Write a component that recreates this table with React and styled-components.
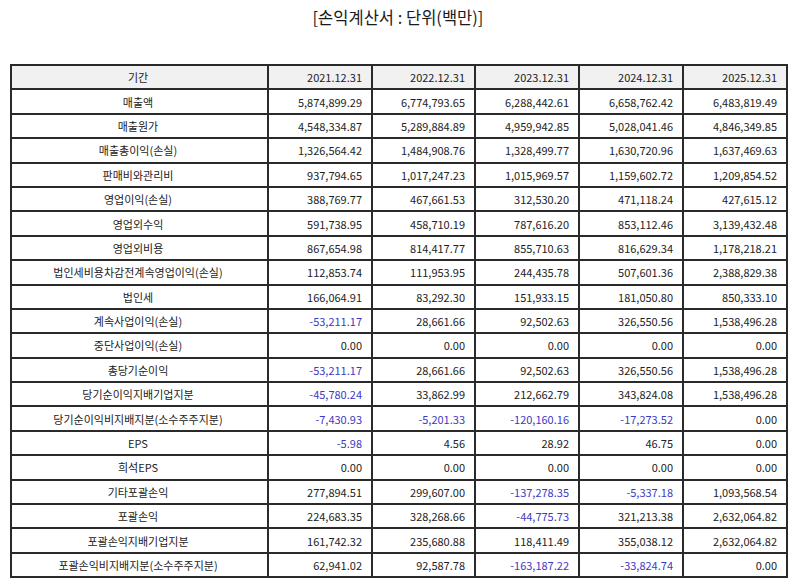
import React from "react";
import styled, { createGlobalStyle } from "styled-components";

const GlobalStyle = createGlobalStyle`
    html, body {
        margin: 0;
        padding: 0;
        background: #ffffff;
    }
    body {
        font-family: "Noto Sans CJK KR", "Noto Sans", sans-serif;
        color: #222;
    }
`;

const Page = styled.div`
    width: 794px;
    padding: 0 8px 0 10px;
    box-sizing: border-box;
`;

const Title = styled.h2`
    margin: 0 0 35px;
    padding-top: 5px;
    font-size: 16.5px;
    font-weight: 400;
    line-height: 24px;
    text-align: center;
    color: #1a1a1a;
`;

const Table = styled.table`
    width: 776px;
    border-collapse: collapse;
    table-layout: fixed;
    font-size: 11px;
`;

const Col = styled.col`
    width: ${(p) => p.$width}px;
`;

const Row = styled.tr`
    height: 24.4px;
`;

const Cell = styled.td`
    border: 2px solid #2a2a2a;
    padding: 0 9px 0 6px;
    text-align: ${(p) => (p.$label ? "center" : "right")};
    color: ${(p) => (p.$negative ? "#3a3ac4" : "#222")};
    background: #fff;
    white-space: nowrap;
    line-height: 16px;
`;

const HeadCell = styled.th`
    border: 2px solid #2a2a2a;
    padding: 0 9px 0 6px;
    text-align: ${(p) => (p.$label ? "center" : "right")};
    font-weight: 400;
    color: #222;
    background: #f1f1f1;
    white-space: nowrap;
    line-height: 16px;
`;

const columnWidths = [257, 104, 103, 104, 104, 104];

const periods = ["2021.12.31", "2022.12.31", "2023.12.31", "2024.12.31", "2025.12.31"];

const rows = [
    ["매출액", "5,874,899.29", "6,774,793.65", "6,288,442.61", "6,658,762.42", "6,483,819.49"],
    ["매출원가", "4,548,334.87", "5,289,884.89", "4,959,942.85", "5,028,041.46", "4,846,349.85"],
    ["매출총이익(손실)", "1,326,564.42", "1,484,908.76", "1,328,499.77", "1,630,720.96", "1,637,469.63"],
    ["판매비와관리비", "937,794.65", "1,017,247.23", "1,015,969.57", "1,159,602.72", "1,209,854.52"],
    ["영업이익(손실)", "388,769.77", "467,661.53", "312,530.20", "471,118.24", "427,615.12"],
    ["영업외수익", "591,738.95", "458,710.19", "787,616.20", "853,112.46", "3,139,432.48"],
    ["영업외비용", "867,654.98", "814,417.77", "855,710.63", "816,629.34", "1,178,218.21"],
    ["법인세비용차감전계속영업이익(손실)", "112,853.74", "111,953.95", "244,435.78", "507,601.36", "2,388,829.38"],
    ["법인세", "166,064.91", "83,292.30", "151,933.15", "181,050.80", "850,333.10"],
    ["계속사업이익(손실)", "-53,211.17", "28,661.66", "92,502.63", "326,550.56", "1,538,496.28"],
    ["중단사업이익(손실)", "0.00", "0.00", "0.00", "0.00", "0.00"],
    ["총당기순이익", "-53,211.17", "28,661.66", "92,502.63", "326,550.56", "1,538,496.28"],
    ["당기순이익지배기업지분", "-45,780.24", "33,862.99", "212,662.79", "343,824.08", "1,538,496.28"],
    ["당기순이익비지배지분(소수주주지분)", "-7,430.93", "-5,201.33", "-120,160.16", "-17,273.52", "0.00"],
    ["EPS", "-5.98", "4.56", "28.92", "46.75", "0.00"],
    ["희석EPS", "0.00", "0.00", "0.00", "0.00", "0.00"],
    ["기타포괄손익", "277,894.51", "299,607.00", "-137,278.35", "-5,337.18", "1,093,568.54"],
    ["포괄손익", "224,683.35", "328,268.66", "-44,775.73", "321,213.38", "2,632,064.82"],
    ["포괄손익지배기업지분", "161,742.32", "235,680.88", "118,411.49", "355,038.12", "2,632,064.82"],
    ["포괄손익비지배지분(소수주주지분)", "62,941.02", "92,587.78", "-163,187.22", "-33,824.74", "0.00"],
];

const App = () => {
    return (
        <>
            <GlobalStyle />
            <Page>
                <Title>[손익계산서 : 단위(백만)]</Title>
                <Table>
                    <colgroup>
                        {columnWidths.map((w, i) => (
                            <Col key={i} $width={w} />
                        ))}
                    </colgroup>
                    <thead>
                        <Row>
                            <HeadCell $label>기간</HeadCell>
                            {periods.map((p) => (
                                <HeadCell key={p}>{p}</HeadCell>
                            ))}
                        </Row>
                    </thead>
                    <tbody>
                        {rows.map(([label, ...values]) => (
                            <Row key={label}>
                                <Cell $label>{label}</Cell>
                                {values.map((v, i) => (
                                    <Cell key={i} $negative={v.startsWith("-")}>{v}</Cell>
                                ))}
                            </Row>
                        ))}
                    </tbody>
                </Table>
            </Page>
        </>
    );
};

export default App;
